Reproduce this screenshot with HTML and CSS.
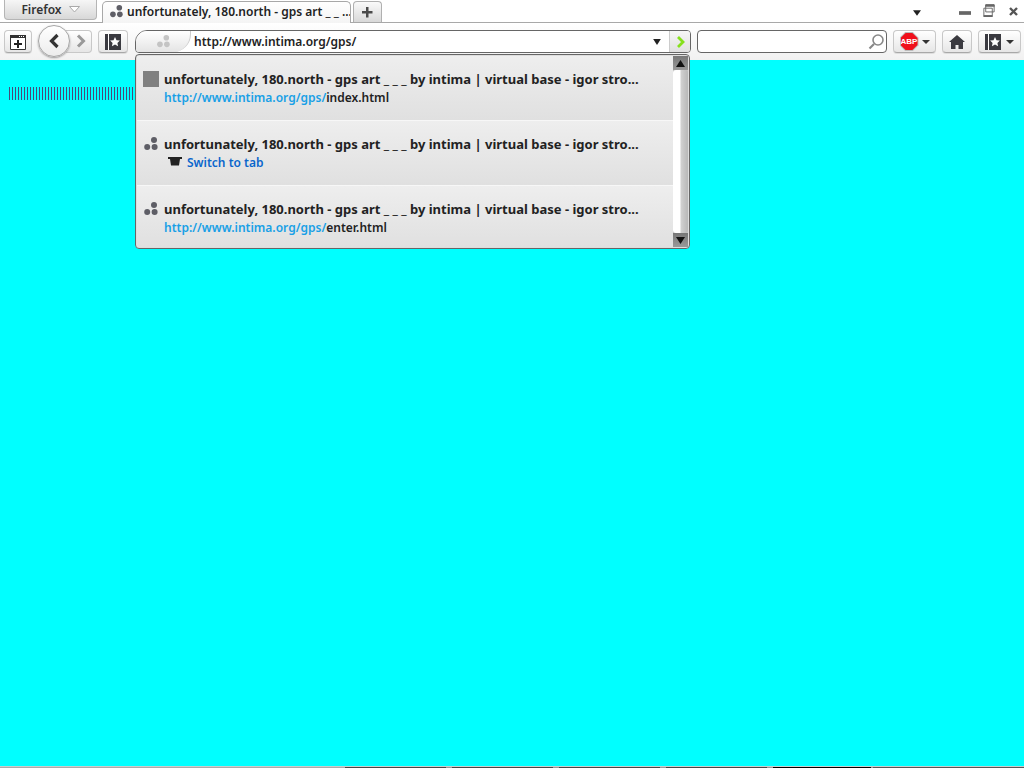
FILE: index.html
```html
<!DOCTYPE html>
<html lang="en">
<head>
<meta charset="utf-8">
<title>Firefox</title>
<link rel="stylesheet" href="styles.css">
</head>
<body>
<svg class="defs" width="0" height="0" aria-hidden="true">
  <symbol id="dots" viewBox="0 0 16 16">
    <circle cx="11" cy="4" r="3"/><circle cx="4.200" cy="11" r="3"/><circle cx="11.600" cy="11" r="3"/>
  </symbol>
  <symbol id="bm" viewBox="0 0 16 16">
    <path d="M0 0h16v16H0z" fill="#3a3a40"/><path d="M3 0h1v16H3z" fill="#fff"/>
    <path d="M10 3l1.500 3.200 3.400.4-2.500 2.300.7 3.400-3.100-1.700-3.100 1.700.7-3.400-2.500-2.300 3.400-.4z" fill="#fff"/>
  </symbol>
</svg>
<div class="page">
  <header class="tabbar">
    <button class="ffbtn">Firefox <svg class="ffarrow" width="11" height="7" viewBox="0 0 11 7"><path d="M.5.500h10L5.500 6z" fill="#fff" stroke="#aaa"/></svg></button>
    <div class="tab">
      <svg class="favicon fav-tab"><use href="#dots"/></svg>
      <span class="tabtitle">unfortunately, 180.north - gps art _ _ ...</span>
    </div>
    <button class="newtab"><svg width="13" height="13" viewBox="0 0 13 13"><path d="M5 1h2.500v4h4v2.500h-4v4H5v-4H1V5h4z" fill="#4a4a4a"/></svg></button>
    <div class="winctl">
      <svg class="alltabs" width="8" height="6" viewBox="0 0 10 7"><path d="M0 0h10L5 7z" fill="#222"/></svg>
      <svg class="wmin" width="12" height="4" viewBox="0 0 13 4"><path d="M0 0h13v4H0z" fill="#666"/></svg>
      <svg class="wmax" width="12" height="14" viewBox="0 0 12 15"><path d="M2.500.5h9v8h-9z M.5 4.500h9v8h-9z" fill="none" stroke="#666"/><path d="M2 1h10v2H2zM0 12h10v2H0z" fill="#666"/></svg>
      <svg class="wclose" width="9" height="9" viewBox="0 0 9 9"><path d="M1 1l7 7M8 1L1 8" stroke="#555" stroke-width="2.400"/></svg>
    </div>
  </header>
  <nav class="toolbar">
    <button class="tbtn tb-new"><svg width="16" height="16" viewBox="0 0 16 16"><path d="M.5 1.500h15v14H.5z" fill="#fff" stroke="#333"/><path d="M0 1h16v3H0z" fill="#333"/><path d="M9 2h1v1H9zM11 2h1v1h-1zM13 2h1v1h-1z" fill="#fff"/><path d="M7 6h2v3h3v2H9v3H7v-3H4V9h3z" fill="#222"/></svg></button>
    <div class="backfwd">
      <button class="back"><svg width="12" height="16" viewBox="0 0 12 16"><path d="M9.500 2L3.500 8l6 6" fill="none" stroke="#333" stroke-width="3.200"/></svg></button>
      <button class="fwd"><svg width="10" height="14" viewBox="0 0 10 14"><path d="M2 1.500L7.500 7 2 12.500" fill="none" stroke="#999" stroke-width="3"/></svg></button>
    </div>
    <button class="tbtn tb-bm"><svg width="16" height="16"><use href="#bm"/></svg></button>
    <div class="urlbar">
      <div class="identity"><svg class="favicon fav-id"><use href="#dots"/></svg></div>
      <span class="url">http://www.intima.org/gps/</span>
      <svg class="urlarrow" width="8" height="6" viewBox="0 0 9 7"><path d="M0 0h9L4.500 7z" fill="#222"/></svg>
      <div class="go"><svg width="9" height="12" viewBox="0 0 9 12"><path d="M2 1l5 5-5 5" fill="none" stroke="#86e01c" stroke-width="2.800"/></svg></div>
    </div>
    <div class="search"><svg width="17" height="17" viewBox="0 0 17 17"><circle cx="10" cy="7" r="5" fill="none" stroke="#888" stroke-width="1.600"/><path d="M6 11l-4.500 4.500" stroke="#888" stroke-width="2.200"/></svg></div>
    <button class="tbtn tb-abp">
      <span class="abpring"><span class="abp">ABP</span></span>
      <svg width="8" height="4" viewBox="0 0 8 4"><path d="M0 0h8L4 4z" fill="#333"/></svg>
    </button>
    <button class="tbtn tb-home"><svg width="16" height="14" viewBox="0 0 16 14"><path d="M8 0l8 7h-2v7H9.500v-4h-3v4H2V7H0z" fill="#3a3a40"/></svg></button>
    <button class="tbtn tb-bms"><svg width="16" height="16"><use href="#bm"/></svg><svg width="8" height="4" viewBox="0 0 8 4"><path d="M0 0h8L4 4z" fill="#333"/></svg></button>
  </nav>
  <main class="content"><div class="ticks"></div></main>
  <footer class="taskstrip">
    <span class="seg seg-light"></span><span class="seg seg-task"></span><span class="seg seg-gap"></span><span class="seg seg-task"></span><span class="seg seg-gap"></span><span class="seg seg-task"></span><span class="seg seg-gap"></span><span class="seg seg-task"></span><span class="seg seg-gap"></span><span class="seg seg-black"></span><span class="seg seg-gap2"></span><span class="seg seg-end"></span>
  </footer>

  <div class="popup">
    <div class="results">
      <div class="row">
        <span class="rowicon graybox"></span>
        <div class="rowtext">
          <div class="rtitle">unfortunately, 180.north - gps art _ _ _ by intima | virtual base - igor stro...</div>
          <div class="rurl"><span class="blue">http://www.intima.org/gps/</span>index.html</div>
        </div>
      </div>
      <div class="row">
        <svg class="rowicon dots"><use href="#dots"/></svg>
        <div class="rowtext">
          <div class="rtitle">unfortunately, 180.north - gps art _ _ _ by intima | virtual base - igor stro...</div>
          <div class="rurl switch"><svg class="tabicon" width="14" height="9" viewBox="0 0 14 9"><path d="M0 0h14v2h-2l-1 6.500H3L2 2H0z" fill="#222"/></svg><span class="swlink">Switch to tab</span></div>
        </div>
      </div>
      <div class="row last">
        <svg class="rowicon dots"><use href="#dots"/></svg>
        <div class="rowtext">
          <div class="rtitle">unfortunately, 180.north - gps art _ _ _ by intima | virtual base - igor stro...</div>
          <div class="rurl"><span class="blue">http://www.intima.org/gps/</span>enter.html</div>
        </div>
      </div>
    </div>
    <div class="scroll">
      <div class="sbtn"><svg width="9" height="7" viewBox="0 0 9 7"><path d="M4.500 0L9 7H0z" fill="#111"/></svg></div>
      <div class="sthumb"></div>
      <div class="sbtn"><svg width="9" height="7" viewBox="0 0 9 7"><path d="M0 0h9L4.500 7z" fill="#111"/></svg></div>
    </div>
  </div>
</div>
</body>
</html>
```
FILE: styles.css
```css
* { box-sizing: border-box; }
html, body { margin: 0; height: 100%; overflow: hidden; }
body { font-family: "Noto Sans", sans-serif; color: #222; }
button { padding: 0; margin: 0; font: inherit; color: inherit; }
.defs { position: absolute; }
.page { position: relative; width: 1024px; height: 768px; display: flex; flex-direction: column; background: #fff; }

.tabbar { height: 23px; flex: none; display: flex; align-items: flex-start; padding-left: 4px; background: #fff; border-bottom: 1px solid #a8a8a8; }
.ffbtn { width: 93px; height: 20px; display: flex; align-items: center; justify-content: center; gap: 7px; border: 1px solid #b5b5b5; border-top: 0; border-radius: 0 0 4px 4px; background: linear-gradient(#f6f6f6, #d8d8d8); font: 600 12px "Noto Sans", sans-serif; color: #333; }
.tab { width: 249px; height: 22px; margin: 1px 0 0 5px; display: flex; align-items: center; gap: 3px; padding: 0 6px 2px 6px; overflow: hidden; border: 1px solid #a8a8a8; border-bottom: 0; border-radius: 5px 5px 0 0; background: linear-gradient(#fff, #f4f4f4); }
.favicon { fill: #5e5e66; flex: none; }
.fav-tab { width: 15px; height: 15px; }
.tabtitle { font: 600 12px "Noto Sans", sans-serif; white-space: nowrap; color: #222; }
.newtab { width: 29px; height: 21px; margin: 1px 0 0 2px; display: flex; align-items: center; justify-content: center; border: 1px solid #b0b0b0; border-bottom: 0; border-radius: 4px 4px 0 0; background: linear-gradient(#fafafa, #d8d8d8); }
.winctl { flex: 1; display: flex; align-items: center; height: 22px; padding-left: 531px; }
.alltabs { margin-top: 3px; }
.wmin { margin: 4px 0 0 38px; }
.wmax { margin: -1px 0 0 12px; }
.wclose { margin: 1px 0 0 14px; }

.toolbar { height: 37px; flex: none; display: flex; align-items: flex-start; padding: 7px 0 0 4px; background: linear-gradient(#fff, #f1f1f1); }
.tbtn { height: 23px; flex: none; display: flex; align-items: center; justify-content: center; gap: 5px; border: 1px solid #c8c8c8; border-bottom-color: #a8a8a8; border-radius: 4px; background: linear-gradient(#fff, #e6e6e6); box-shadow: 0 1px 0 #ddd; }
.tb-new { width: 28px; }
.backfwd { display: flex; margin: -5px 0 0 6px; align-items: center; height: 32px; }
.back { position: relative; z-index: 1; width: 32px; height: 32px; display: flex; align-items: center; justify-content: center; border: 1px solid #a5a5a5; border-radius: 50%; background: linear-gradient(#fff, #ececec); box-shadow: 0 1px 2px #999; }
.fwd { width: 26px; height: 23px; margin-left: -4px; padding-left: 5px; display: flex; align-items: center; justify-content: center; border: 1px solid #c8c8c8; border-left: 0; border-radius: 0 4px 4px 0; background: linear-gradient(#fff, #e6e6e6); }
.tb-bm { width: 30px; margin-left: 6px; }
.urlbar { width: 556px; height: 23px; flex: none; margin-left: 7px; display: flex; align-items: center; border: 1px solid #666; border-radius: 12px 4px 4px 4px; background: #fff; }
.identity { width: 55px; height: 21px; display: flex; align-items: center; justify-content: center; border-right: 1px solid #ccc; border-radius: 11px 0 18px 3px; background: linear-gradient(#fff, #e4e4e4); }
.fav-id { width: 15px; height: 15px; fill: #c4c4c4; }
.url { margin-left: 3px; flex: 1; font: 600 12px "Noto Sans", sans-serif; color: #222; }
.urlarrow { margin-right: 8px; }
.go { width: 21px; height: 21px; display: flex; align-items: center; justify-content: center; border-left: 1px solid #ccc; background: linear-gradient(#f6f6f6, #e0e0e0); border-radius: 0 3px 3px 0; }
.search { width: 190px; height: 23px; flex: none; margin-left: 6px; display: flex; align-items: center; justify-content: flex-end; padding-right: 1px; border: 1px solid #666; border-radius: 4px; background: #fff; }
.tb-abp { width: 43px; margin-left: 6px; gap: 3px; }
.abpring { width: 19px; height: 19px; display: flex; align-items: center; justify-content: center; background: #bbb; clip-path: polygon(30% 0, 70% 0, 100% 30%, 100% 70%, 70% 100%, 30% 100%, 0 70%, 0 30%); }
.abp { width: 17px; height: 17px; display: flex; align-items: center; justify-content: center; background: #f0101c; color: #fff; font: bold 8px "Liberation Sans", sans-serif; clip-path: polygon(30% 0, 70% 0, 100% 30%, 100% 70%, 70% 100%, 30% 100%, 0 70%, 0 30%); }
.tb-home { width: 30px; margin-left: 6px; }
.tb-bms { width: 43px; margin-left: 6px; }

.content { flex: 1; background: #0ff; padding: 27px 0 0 9px; }
.ticks { width: 126px; height: 13px; background: repeating-linear-gradient(90deg, #4a4a78 0 1px, transparent 1px 3px); }
.taskstrip { height: 2px; flex: none; display: flex; }
.seg { height: 2px; border-top: 1px solid #ccc; }
.seg-light { width: 345px; background: #aaa; }
.seg-task { width: 101px; background: #444; }
.seg-gap { width: 6px; background: #999; }
.seg-black { width: 98px; background: #000; }
.seg-gap2 { width: 2px; background: #999; }
.seg-end { flex: 1; background: #555; }

.popup { position: absolute; left: 135px; top: 54px; width: 555px; height: 195px; display: flex; padding: 1px; border: 1px solid #666; border-radius: 4px; background: #fff; box-shadow: inset 0 0 0 1px #ddd; overflow: hidden; }
.results { flex: 1; min-width: 0; display: flex; flex-direction: column; }
.row { height: 65px; flex: none; display: flex; align-items: flex-start; padding: 13px 0 0 6px; background: linear-gradient(#eee, #e0e0e0); border-bottom: 1px solid #f7f7f7; }
.row.last { height: 61px; border-bottom: 0; }
.rowicon { width: 16px; height: 16px; flex: none; margin-top: 2px; }
.graybox { background: #808080; }
.dots { fill: #5e5e66; }
.rowtext { margin-left: 5px; min-width: 0; overflow: hidden; }
.rtitle { font: bold 13px/20px "Noto Sans", sans-serif; white-space: nowrap; color: #222; }
.rurl { font: 600 12px/18px "Noto Sans", sans-serif; white-space: nowrap; color: #222; }
.blue { color: #18a0e6; }
.switch { display: flex; align-items: center; padding-left: 4px; }
.tabicon { margin-right: 5px; margin-top: -3px; }
.swlink { color: #0a66cc; }

.scroll { width: 15px; flex: none; display: flex; flex-direction: column; background: #c4c4c4; }
.sbtn { height: 14px; flex: none; display: flex; align-items: center; justify-content: center; background: linear-gradient(#777, #999); }
.sthumb { flex: 1; border-radius: 3px; background: linear-gradient(90deg, #fff 0 45%, #d0d0d0 55%, #b8b8b8); }
```
